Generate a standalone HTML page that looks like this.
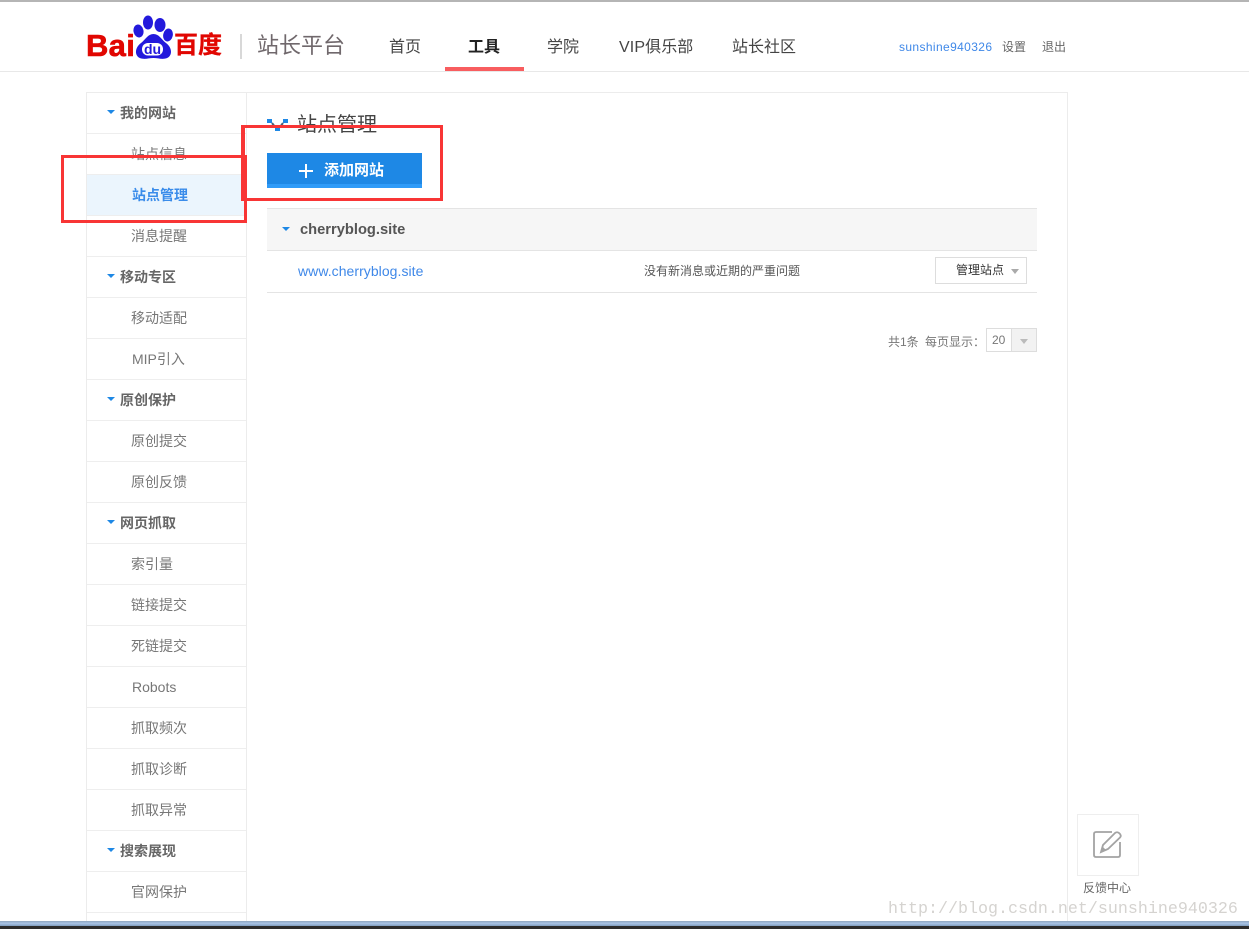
<!DOCTYPE html>
<html lang="zh"><head><meta charset="utf-8"><title>站点管理</title>
<style>
html,body{margin:0;padding:0;background:#fff}
#p{position:relative;width:1249px;height:929px;overflow:hidden;background:#fff;font-family:"Liberation Sans","Noto Sans CJK SC",sans-serif;color:#666}
#p div,#p svg{position:absolute}
.t{white-space:nowrap;line-height:20px;height:20px}
.h{left:87px;width:159px;height:40px;border-bottom:1px solid #eee;}
.r{left:87px;width:159px;height:40px;border-bottom:1px solid #eee;}
.lh{left:120px;font-size:14px;font-weight:bold;color:#666;white-space:nowrap;line-height:20px}
.li{left:131px;font-size:14px;color:#777;white-space:nowrap;line-height:20px}
.tri{width:0;height:0;border-left:4px solid transparent;border-right:4px solid transparent;border-top:4px solid #1e88e5}
.n{top:38px;font-size:16px;color:#444;white-space:nowrap;line-height:20px}
</style></head><body><div id="p">
<div style="left:0;top:0;width:1249px;height:2px;background:#b5b5b5"></div>
<div style="left:0;top:71px;width:1249px;height:1px;background:#e8e8e8"></div>

<div class="t" style="left:86px;top:29px;height:34px;line-height:34px;font-size:31px;font-weight:bold;color:#e10601;-webkit-text-stroke:.6px #e10601;letter-spacing:.3px">Bai</div>
<svg style="left:133px;top:14px" width="40" height="47" viewBox="0 0 40 47">
<ellipse cx="5.500" cy="17" rx="5" ry="6.500" fill="#2319dc" transform="rotate(-12 5.500 17)"/>
<ellipse cx="15" cy="8.500" rx="5" ry="7" fill="#2319dc"/>
<ellipse cx="27" cy="11" rx="5.500" ry="7" fill="#2319dc"/>
<ellipse cx="35" cy="21" rx="4.800" ry="6.500" fill="#2319dc" transform="rotate(12 35 21)"/>
<path d="M20.500 20C15 20 13 25 8 29C1 34 1 44 10 44.800C14 45 17 44 20.500 44C24 44 27 45 31 44.800C40 44 40 34 33 29C28 25 26 20 20.500 20Z" fill="#2319dc"/>
<rect x="9" y="29" width="21" height="12.500" rx="6" fill="#fff"/>
<text x="19.500" y="40" font-family="Liberation Sans" font-size="14" font-weight="bold" fill="#2319dc" text-anchor="middle">du</text>
</svg>
<div class="t" style="left:174px;top:29px;height:34px;line-height:34px;font-size:24px;font-weight:bold;color:#e10601;-webkit-text-stroke:.3px #e10601">百度</div>
<div style="left:240px;top:34px;width:2px;height:25px;background:#d8d8d8"></div>
<div class="t" style="left:257px;top:32px;height:28px;line-height:28px;font-size:22px;color:#70686c">站长平台</div>

<div class="n" style="left:389px">首页</div>
<div class="n" style="left:468px;font-weight:bold;color:#222">工具</div>
<div style="left:445px;top:67px;width:79px;height:4px;background:#f85d5f"></div>
<div class="n" style="left:547px">学院</div>
<div class="n" style="left:619px;letter-spacing:.1px">VIP俱乐部</div>
<div class="n" style="left:732px">站长社区</div>
<div class="t" style="left:899px;top:37px;font-size:12px;color:#3f88e8;letter-spacing:.38px">sunshine940326</div>
<div class="t" style="left:1002px;top:37px;font-size:12px;color:#666">设置</div>
<div class="t" style="left:1042px;top:37px;font-size:12px;color:#666">退出</div>

<!-- frame -->
<div style="left:86px;top:92px;width:982px;height:1px;background:#ececec"></div>
<div style="left:86px;top:92px;width:1px;height:829px;background:#ececec"></div>
<div style="left:246px;top:92px;width:1px;height:829px;background:#ececec"></div>
<div style="left:1067px;top:92px;width:1px;height:829px;background:#ececec"></div>

<!-- sidebar -->
<div class="h" style="top:93px"></div><div class="tri" style="left:107px;top:110px"></div><div class="lh" style="top:103px">我的网站</div>
<div class="r" style="top:134px"></div><div class="li" style="top:144px">站点信息</div>
<div class="r" style="top:175px;background:#ebf5fd"></div><div class="li" style="left:132px;top:185px;color:#3a8cea;font-weight:bold">站点管理</div>
<div class="r" style="top:216px"></div><div class="li" style="top:226px">消息提醒</div>
<div class="h" style="top:257px"></div><div class="tri" style="left:107px;top:274px"></div><div class="lh" style="top:267px">移动专区</div>
<div class="r" style="top:298px"></div><div class="li" style="top:308px">移动适配</div>
<div class="r" style="top:339px"></div><div class="li" style="left:132px;top:349px">MIP引入</div>
<div class="h" style="top:380px"></div><div class="tri" style="left:107px;top:397px"></div><div class="lh" style="top:390px">原创保护</div>
<div class="r" style="top:421px"></div><div class="li" style="top:431px">原创提交</div>
<div class="r" style="top:462px"></div><div class="li" style="top:472px">原创反馈</div>
<div class="h" style="top:503px"></div><div class="tri" style="left:107px;top:520px"></div><div class="lh" style="top:513px">网页抓取</div>
<div class="r" style="top:544px"></div><div class="li" style="top:554px">索引量</div>
<div class="r" style="top:585px"></div><div class="li" style="top:595px">链接提交</div>
<div class="r" style="top:626px"></div><div class="li" style="top:636px">死链提交</div>
<div class="r" style="top:667px"></div><div class="li" style="left:132px;top:677px">Robots</div>
<div class="r" style="top:708px"></div><div class="li" style="top:718px">抓取频次</div>
<div class="r" style="top:749px"></div><div class="li" style="top:759px">抓取诊断</div>
<div class="r" style="top:790px"></div><div class="li" style="top:800px">抓取异常</div>
<div class="h" style="top:831px"></div><div class="tri" style="left:107px;top:848px"></div><div class="lh" style="top:841px">搜索展现</div>
<div class="r" style="top:872px"></div><div class="li" style="top:882px">官网保护</div>

<!-- main -->
<svg style="left:267px;top:119px" width="21" height="13" viewBox="0 0 21 13"><g fill="#1e88e5"><rect x="0" y="0" width="5" height="4"/><rect x="16" y="0" width="5" height="4"/><rect x="8" y="8" width="5" height="4"/></g><path d="M5 4L8 8M16 4L13 8" stroke="#4a5f78" stroke-width="2" fill="none"/></svg>
<div class="t" style="left:297px;top:112px;height:26px;line-height:26px;font-size:20px;color:#444">站点管理</div>

<div style="left:267px;top:153px;width:155px;height:35px;background:#1e88e5"></div>
<div style="left:267px;top:184px;width:155px;height:4px;background:#2f9bf8"></div>
<div style="left:299px;top:170px;width:14px;height:2px;background:#fff"></div>
<div style="left:305px;top:164px;width:2px;height:14px;background:#fff"></div>
<div class="t" style="left:324px;top:161px;font-size:15px;font-weight:bold;color:#fff">添加网站</div>

<div style="left:267px;top:208px;width:770px;height:41px;background:#f6f6f6;border-top:1px solid #e4e4e4;border-bottom:1px solid #e4e4e4"></div>
<div class="tri" style="left:282px;top:227px"></div>
<div class="t" style="left:300px;top:220px;font-size:14.700px;font-weight:bold;color:#555">cherryblog.site</div>
<div class="t" style="left:298px;top:261px;font-size:14px;color:#3f88e8;letter-spacing:.05px">www.cherryblog.site</div>
<div class="t" style="left:644px;top:261px;font-size:12px;color:#555">没有新消息或近期的严重问题</div>
<div style="left:935px;top:257px;width:90px;height:25px;border:1px solid #ddd"></div>
<div class="t" style="left:956px;top:260px;font-size:12px;color:#333">管理站点</div>
<div class="tri" style="left:1011px;top:269px;border-top-color:#aaa;border-top-width:5px"></div>
<div style="left:267px;top:292px;width:770px;height:1px;background:#e4e4e4"></div>

<div class="t" style="left:888px;top:332px;font-size:12px;color:#777">共1条</div>
<div class="t" style="left:925px;top:332px;font-size:12px;color:#777">每页显示：</div>
<div style="left:986px;top:328px;width:49px;height:22px;border:1px solid #ddd"></div>
<div class="t" style="left:992px;top:330px;font-size:12px;color:#777">20</div>
<div style="left:1011px;top:329px;width:24px;height:22px;background:#f2f2f2;border-left:1px solid #ddd"></div>
<div class="tri" style="left:1020px;top:339px;border-top-color:#bbb;border-top-width:5px"></div>

<!-- feedback -->
<div style="left:1077px;top:814px;width:60px;height:60px;border:1px solid #eee;background:#fff"></div>
<svg style="left:1091px;top:829px" width="32" height="30" viewBox="0 0 32 30" fill="none" stroke="#a3a3a3">
<path d="M21 3H5Q3 3 3 5V26Q3 28 5 28H27Q29 28 29 26V13" stroke-width="1.800"/>
<path d="M10 23L12 16L24 4Q26 2.500 28 4L29 5Q30.500 7 29 8.500L17 20Z" stroke-width="1.800" fill="#fff"/>
<path d="M10 23L11.500 17.500L15.500 21.500Z" fill="#a3a3a3" stroke="none"/>
</svg>
<div class="t" style="left:1083px;top:878px;font-size:12px;color:#666">反馈中心</div>

<div class="t" style="left:888px;top:900px;font-family:'Liberation Mono',monospace;font-size:16.670px;color:#d5d3d0">http://blog.csdn.net/sunshine940326</div>

<!-- bottom chrome -->
<div style="left:0;top:921px;width:1249px;height:5px;background:linear-gradient(#8fa6c0,#a8c4e6 50%,#7f9cbd)"></div>
<div style="left:0;top:926px;width:1249px;height:3px;background:#2c2c2c"></div>

<!-- red annotation boxes -->
<div style="left:61px;top:155px;width:180px;height:62px;border:3px solid #f83535"></div>
<div style="left:241px;top:125px;width:195px;height:70px;border:3px solid #f83535;border-left-width:4px"></div>
</div></body></html>
